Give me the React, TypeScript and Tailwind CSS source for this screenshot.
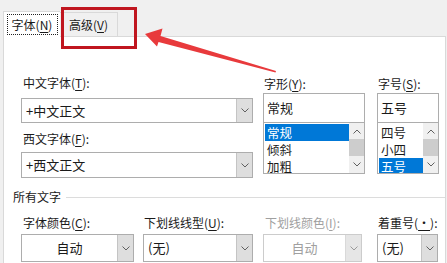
import React from "react";

function Mn({ text, k, tail = ":", disabled = false }: { text: string; k: string; tail?: string; disabled?: boolean }) {
  return (
    <span className={disabled ? "text-[#a0a0a0]" : "text-[#1a1a1a]"}>
      {text}(<span className="underline underline-offset-2">{k}</span>){tail}
    </span>
  );
}

function Chevron({ up = false, color = "#606060" }: { up?: boolean; color?: string }) {
  return (
    <svg width="8" height="5" viewBox="0 0 8 5" className="block">
      <polyline
        points={up ? "0.5,4.5 4,1 7.5,4.5" : "0.5,0.5 4,4 7.5,0.5"}
        fill="none"
        stroke={color}
        strokeWidth="1"
      />
    </svg>
  );
}

function Combo({
  value,
  center = false,
  disabled = false,
  className = "",
}: {
  value: string;
  center?: boolean;
  disabled?: boolean;
  className?: string;
}) {
  return (
    <div
      className={`flex border bg-white ${disabled ? "border-[#cccccc]" : "border-[#adadad]"} ${className}`}
    >
      <div
        className={`flex flex-1 items-center text-[13px] ${center ? "justify-center" : "pl-[4px]"} ${
          disabled ? "text-[#a0a0a0]" : "text-[#1a1a1a]"
        }`}
      >
        {value}
      </div>
      <div
        className={`flex w-[16px] items-center justify-center border-l ${
          disabled ? "border-[#d9d9d9] bg-[#e6e6e6]" : "border-[#c4c4c4] bg-[#dedede]"
        }`}
      >
        <Chevron color={disabled ? "#9a9a9a" : "#606060"} />
      </div>
    </div>
  );
}

function ListCol({
  label,
  k,
  value,
  items,
  selected,
  width,
}: {
  label: string;
  k: string;
  value: string;
  items: string[];
  selected: number;
  width: string;
}) {
  return (
    <div className={`flex flex-col ${width}`}>
      <div className="mt-[1px] h-[16px] pl-[1px] text-[12px] leading-[16px]">
        <Mn text={label} k={k} />
      </div>
      <div className="mt-[1px] flex h-[30px] items-center border border-[#adadad] bg-white pl-[3px] text-[13px] text-[#1a1a1a]">
        {value}
      </div>
      <div className="flex h-[51px] border border-t-0 border-[#adadad] bg-white">
        <div className="flex flex-1 flex-col overflow-hidden pl-[1px] pt-[1px]">
          {items.map((it, i) => (
            <div
              key={it}
              className={`flex h-[17px] shrink-0 items-center pl-[2px] text-[12.5px] leading-[17px] ${
                i === selected ? "bg-[#0078d7] text-white" : "text-[#1a1a1a]"
              }`}
            >
              {it}
            </div>
          ))}
        </div>
        <div className="flex w-[15px] flex-col items-center bg-[#f0f0f0]">
          <div className="flex h-[16px] items-center justify-center">
            <Chevron up />
          </div>
          <div className="h-[17px] w-full bg-[#cdcdcd]" />
          <div className="flex flex-1 items-center justify-center">
            <Chevron />
          </div>
        </div>
      </div>
    </div>
  );
}

export default function App() {
  return (
    <div className="relative h-[263px] w-[447px] overflow-hidden bg-[#f0f0f0] font-['Microsoft_YaHei_UI','Noto_Sans_CJK_SC',sans-serif] text-[12px]">
      {/* tabs */}
      <div className="flex h-[36px] items-end pl-[3px]">
        <div className="relative z-10 -mb-[1px] flex h-[26px] w-[57px] items-center justify-center border-l border-t border-[#d9d9d9] bg-white">
          <div className="flex h-[21px] w-[51px] items-center justify-center border border-dotted border-[#222]">
            <Mn text="字体" k="N" tail="" />
          </div>
        </div>
        <div className="flex h-[24px] w-[58px] items-center justify-center border-r border-t border-[#d9d9d9] bg-[#f0f0f0] pt-[1px]">
          <Mn text="高级" k="V" tail="" />
        </div>
      </div>

      {/* panel */}
      <div className="ml-[3px] h-[228px] w-[443px] border-l border-r border-t border-[#d9d9d9] bg-white">
        <div className="flex pl-[17px] pt-[38px]">
          <div className="flex w-[232px] flex-col">
            <div className="h-[16px] pl-[2px] text-[12px] leading-[16px]">
              <Mn text="中文字体" k="T" />
            </div>
            <Combo value="+中文正文" className="mt-[7px] h-[25px]" />
            <div className="mt-[8px] h-[16px] pl-[2px] text-[12px] leading-[16px]">
              <Mn text="西文字体" k="F" />
            </div>
            <Combo value="+西文正文" className="mt-[5px] h-[26px]" />
          </div>
          <div className="ml-[10px]">
            <ListCol label="字形" k="Y" value="常规" items={["常规", "倾斜", "加粗"]} selected={0} width="w-[102px]" />
          </div>
          <div className="ml-[12px]">
            <ListCol label="字号" k="S" value="五号" items={["四号", "小四", "五号"]} selected={2} width="w-[62px]" />
          </div>
        </div>

        {/* group */}
        <div className="mt-[11px] flex items-center pl-[9px]">
          <span className="h-[16px] text-[12px] leading-[16px] text-[#1a1a1a]">所有文字</span>
          <div className="ml-[5px] h-px flex-1 bg-[#dcdcdc]" />
        </div>

        <div className="mt-[10px] flex pl-[17px]">
          <div className="flex w-[113px] flex-col">
            <div className="h-[16px] pl-[2px] leading-[16px]">
              <Mn text="字体颜色" k="C" />
            </div>
            <Combo value="自动" center className="mt-[3px] h-[28px]" />
          </div>
          <div className="ml-[9px] flex w-[110px] flex-col">
            <div className="h-[16px] pl-[1px] leading-[16px]">
              <Mn text="下划线线型" k="U" />
            </div>
            <Combo value="(无)" className="mt-[3px] h-[28px]" />
          </div>
          <div className="ml-[10px] flex w-[99px] flex-col">
            <div className="h-[16px] pl-[2px] leading-[16px]">
              <Mn text="下划线颜色" k="I" disabled />
            </div>
            <Combo value="自动" center disabled className="mt-[3px] h-[28px]" />
          </div>
          <div className="ml-[15px] flex w-[61px] flex-col">
            <div className="h-[16px] pl-[1px] leading-[16px]">
              <Mn text="着重号" k="·" />
            </div>
            <Combo value="(无)" className="mt-[3px] h-[28px]" />
          </div>
        </div>
      </div>

      {/* annotation */}
      <div className="absolute left-[61px] top-[7px] h-[42px] w-[76px] border-[3px] border-[#c0161f]" />
      <svg className="absolute left-0 top-0" width="447" height="263" viewBox="0 0 447 263">
        <polygon
          points="145,34 162.5,28.5 160.5,36 276,71 275.5,72.5 158.5,42 157,46.5"
          fill="#e83a3c"
        />
      </svg>
    </div>
  );
}
